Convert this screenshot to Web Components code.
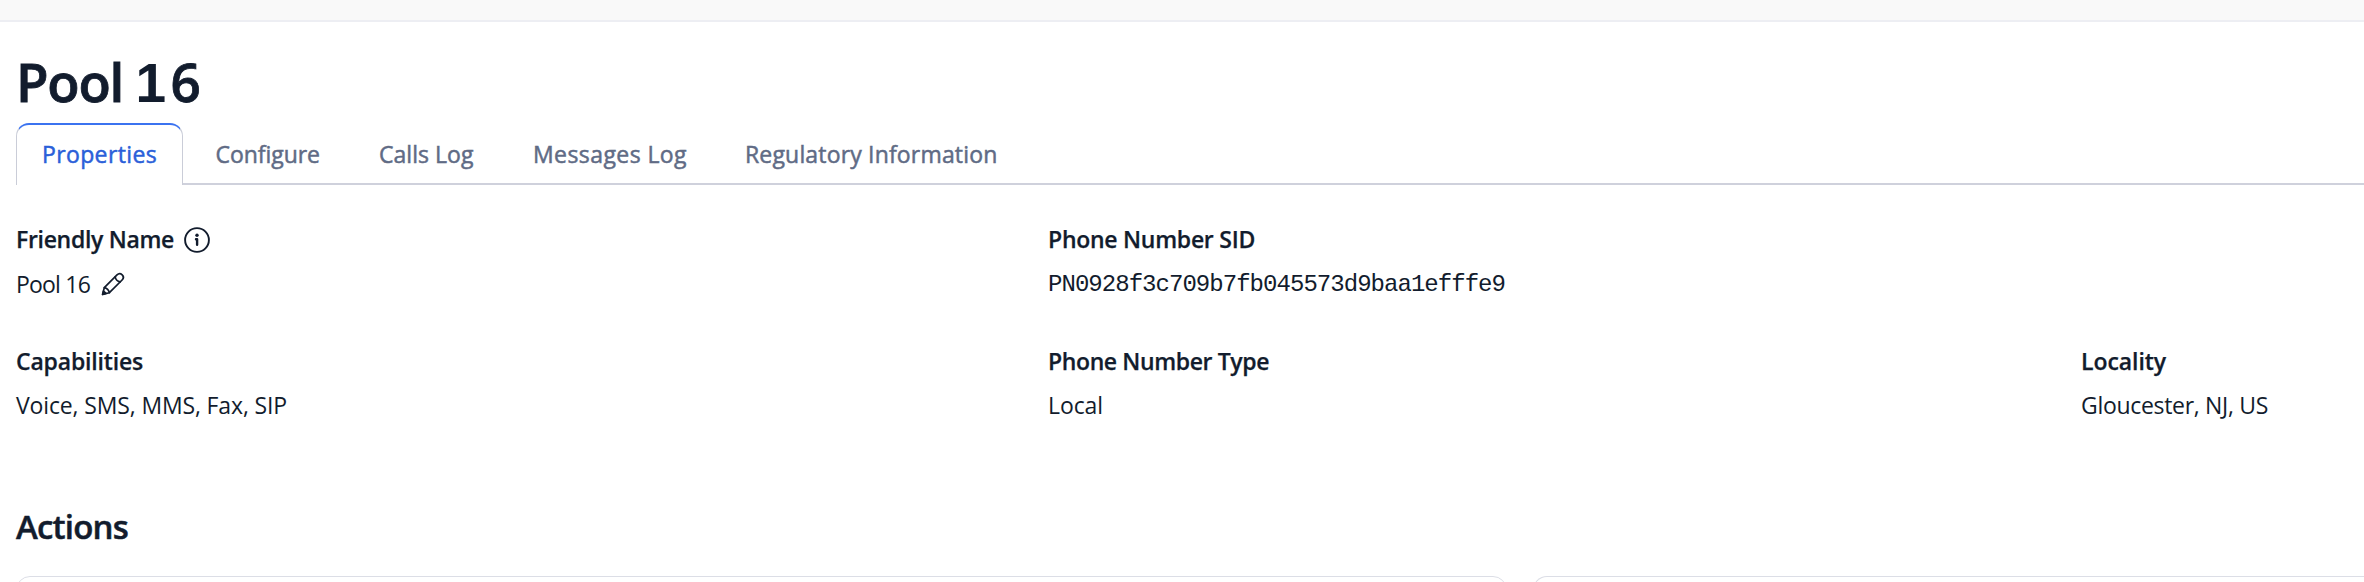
<!DOCTYPE html>
<html lang="en">
<head>
<meta charset="utf-8">
<title>Pool 16</title>
<style>
html,body{margin:0;background:#fff}
body{width:2364px;height:582px;overflow:hidden;font-family:"Open Sans","Noto Sans",sans-serif;color:#121c2d}
</style>
</head>
<body>
<number-page></number-page>
<script>
// Single line of text, tracked so that it fills the given measure.
class FitText extends HTMLElement {
  connectedCallback() {
    const root = this.attachShadow({mode: 'open'});
    root.innerHTML = `<style>:host{display:block;flex:none;white-space:pre;width:${this.getAttribute('w')}px}span{display:inline-block}</style><span><slot></slot></span>`;
    const span = root.querySelector('span');
    const n = this.textContent.length;
    const gap = (Number(this.getAttribute('w')) - span.getBoundingClientRect().width) / n;
    span.style.letterSpacing = gap.toFixed(3) + 'px';
  }
}

class InfoIcon extends HTMLElement {
  connectedCallback() {
    this.attachShadow({mode: 'open'}).innerHTML = `<style>:host{display:block;width:26px;height:26px;margin-top:2px}svg{display:block}</style>
    <svg width="26" height="26" viewBox="0 0 26 26" fill="none" stroke="#121c2d"><circle cx="13" cy="13" r="11.9" stroke-width="1.9"/><circle cx="13" cy="8.3" r="1.7" fill="#121c2d" stroke="none"/><path d="M12 12.2H13.1V17.8" stroke-width="2.4" stroke-linecap="round" stroke-linejoin="round"/></svg>`;
  }
}

class EditIcon extends HTMLElement {
  connectedCallback() {
    this.attachShadow({mode: 'open'}).innerHTML = `<style>:host{display:block;width:24px;height:24px}svg{display:block}</style>
    <svg width="24" height="24" viewBox="0 0 24 24" fill="none" stroke="#121c2d" stroke-width="1.7" stroke-linejoin="round" stroke-linecap="round"><path d="M1.6 22.4L3.3 15.6L16 2.9C17.5 1.4 19.7 1.4 21.2 2.8C22.7 4.3 22.6 6.5 21.1 8L8.4 20.7Z"/><path d="M14.2 4.8C14.7 7.6 16.4 9.3 19.2 9.8M3.3 15.6C5.8 16.2 7.8 18.2 8.4 20.7"/><path d="M1.6 22.4L2.5 19L5 21.4Z" fill="#121c2d"/></svg>`;
  }
}

class PageTab extends HTMLElement {
  connectedCallback() {
    this.attachShadow({mode: 'open'}).innerHTML = `<style>
    :host{display:block;box-sizing:border-box;height:62px;padding-top:13px;font-weight:400;-webkit-text-stroke:.5px currentColor;font-size:23px;line-height:36px;color:#606b85;border-bottom:2px solid #cfd1dc}
    :host([active]){width:167px;padding:11px 0 0 25px;color:#2b5fd9;border:1px solid #cacdd8;border-top:2px solid #3b73f0;border-bottom:0;border-radius:13px 13px 0 0}
    </style><slot></slot>`;
  }
}

class TabBar extends HTMLElement {
  connectedCallback() {
    this.attachShadow({mode: 'open'}).innerHTML = `<style>:host{display:flex;margin:9px 0 0 16px}i{flex:1;border-bottom:2px solid #cfd1dc}</style><slot></slot><i></i>`;
  }
}

class DataField extends HTMLElement {
  connectedCallback() {
    this.attachShadow({mode: 'open'}).innerHTML = `<style>
    :host{display:block;font-size:23px;line-height:36px}
    .l,.v{display:flex;height:36px;align-items:center}
    .l{font-weight:600;-webkit-text-stroke:.25px currentColor;gap:10px}.v{margin-top:var(--gap,8px);gap:11px}
    </style><div class="l"><slot name="label"></slot></div><div class="v"><slot></slot></div>`;
  }
}

class ActionCard extends HTMLElement {
  connectedCallback() {
    this.attachShadow({mode: 'open'}).innerHTML = `<style>:host{display:block;box-sizing:border-box;height:200px;border:1px solid #dcdee6;border-radius:14px;background:#fff}:host([cut]){border-right:0;border-top-right-radius:0}</style>`;
  }
}

class NumberPage extends HTMLElement {
  connectedCallback() {
    this.attachShadow({mode: 'open'}).innerHTML = `<style>
    :host{display:block;height:582px;overflow:hidden}
    header{height:20px;background:#f9f9f9;border-bottom:2px solid #edeef3}
    h1{display:flex;align-items:baseline;height:64px;margin:28px 0 0 16px;font-weight:600;-webkit-text-stroke:.8px currentColor;font-size:53px;line-height:64px}
    .one{font-family:"Liberation Sans",sans-serif;font-weight:700;font-size:55px;-webkit-text-stroke:0}
    .grid{display:grid;grid-template-columns:1032px 1033px 283px;margin:36px 0 0 16px;row-gap:41px}
    .top{--gap:9px}
    .mono{font:24px/36px "Liberation Mono",monospace;height:34px}
    h2{margin:80px 0 0 16px;font-weight:600;-webkit-text-stroke:.5px currentColor;font-size:33px;line-height:48px}
    .cards{display:grid;grid-template-columns:1491px 1fr;gap:26px;height:6px;overflow:hidden;margin:25px 0 0 16px}
    </style>
    <header></header>
    <h1><fit-text w="119.5">Pool </fit-text><fit-text class="one" w="35">1</fit-text><fit-text w="31">6</fit-text></h1>
    <tab-bar>
      <page-tab active><fit-text w="115">Properties</fit-text></page-tab>
      <page-tab style="padding-left:32.5px"><fit-text w="104.5">Configure</fit-text></page-tab>
      <page-tab style="padding-left:59px"><fit-text w="94.5">Calls Log</fit-text></page-tab>
      <page-tab style="padding-left:59.5px"><fit-text w="154">Messages Log</fit-text></page-tab>
      <page-tab style="padding-left:58px"><fit-text w="252.5">Regulatory Information</fit-text></page-tab>
    </tab-bar>
    <div class="grid">
      <data-field class="top"><fit-text slot="label" w="158">Friendly Name</fit-text><info-icon slot="label"></info-icon><fit-text w="74">Pool 16</fit-text><edit-icon></edit-icon></data-field>
      <data-field class="top"><fit-text slot="label" w="207">Phone Number SID</fit-text><fit-text class="mono" w="457">PN0928f3c709b7fb045573d9baa1efffe9</fit-text></data-field>
      <span></span>
      <data-field><fit-text slot="label" w="127">Capabilities</fit-text><fit-text w="271">Voice, SMS, MMS, Fax, SIP</fit-text></data-field>
      <data-field><fit-text slot="label" w="221">Phone Number Type</fit-text><fit-text w="55">Local</fit-text></data-field>
      <data-field><fit-text slot="label" w="85">Locality</fit-text><fit-text w="187">Gloucester, NJ, US</fit-text></data-field>
    </div>
    <h2><fit-text w="112">Actions</fit-text></h2>
    <div class="cards"><action-card></action-card><action-card cut></action-card></div>`;
  }
}

// Containers come first so text is measured with its final font.
customElements.define('number-page', NumberPage);
customElements.define('tab-bar', TabBar);
customElements.define('page-tab', PageTab);
customElements.define('data-field', DataField);
customElements.define('action-card', ActionCard);
customElements.define('info-icon', InfoIcon);
customElements.define('edit-icon', EditIcon);
customElements.define('fit-text', FitText);
</script>
</body>
</html>
